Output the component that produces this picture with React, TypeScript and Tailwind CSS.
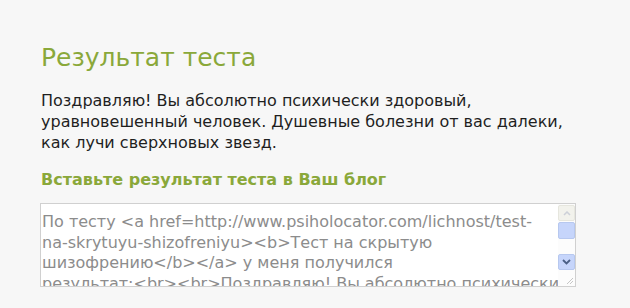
import React from "react";

function ScrollBar() {
  return (
    <div className="flex w-[17px] flex-col bg-[#fcfcfc] pt-[1px]">
      <div className="flex h-[16px] items-center justify-center rounded-[2px] border border-[#e6e6de] bg-[#f2f2ec]">
        <svg width="8" height="5" viewBox="0 0 8 5">
          <path d="M1 4 L4 1 L7 4" fill="none" stroke="#cdd0d8" strokeWidth="1.5" />
        </svg>
      </div>
      <div className="mt-[1px] h-[17px] rounded-[2px] border border-[#b7c8ef] bg-[#c6d5fb]" />
      <div className="h-[15px]" />
      <div className="flex h-[16px] items-center justify-center rounded-[2px] border border-[#b7c8ef] bg-[#c6d5fb]">
        <svg width="9" height="6" viewBox="0 0 9 6">
          <path d="M1 1 L4.5 4.5 L8 1" fill="none" stroke="#4a5f86" strokeWidth="1.8" />
        </svg>
      </div>
      <div className="relative flex-1">
        <svg className="absolute bottom-[1px] right-[1px]" width="10" height="10" viewBox="0 0 10 10">
          <path d="M9 3 L3 9 M9 6 L6 9" stroke="#c6c6c6" strokeWidth="1" />
        </svg>
      </div>
    </div>
  );
}

export default function App() {
  return (
    <div className="h-[308px] w-[630px] overflow-hidden bg-[#f7f7f7] font-['DejaVu_Sans',Verdana,sans-serif]">
      <div className="pl-[41px] pt-[43px]">
        <h1 className="text-[25px] leading-[30px] text-[#8aa83a]">Результат теста</h1>
        <p className="mt-[17px] text-[16px] leading-[21px] text-[#1f1f1f]">
          Поздравляю! Вы абсолютно психически здоровый,
          <br />
          уравновешенный человек. Душевные болезни от вас далеки,
          <br />
          как лучи сверхновых звезд.
        </p>
        <h2 className="mt-[16px] text-[16px] font-bold leading-[22px] text-[#8aa83a]">
          Вставьте результат теста в Ваш блог
        </h2>
        <div className="ml-[-1px] mt-[12px] flex h-[84px] w-[536px] border border-[#d0d0d0] bg-white">
          <div className="flex-1 overflow-hidden whitespace-nowrap pl-[1px] pt-[8px] text-[16px] leading-[20.5px] text-[#8c8c8c]">
            По тесту &lt;a href=http://www.psiholocator.com/lichnost/test-
            <br />
            na-skrytuyu-shizofreniyu&gt;&lt;b&gt;Тест на скрытую
            <br />
            шизофрению&lt;/b&gt;&lt;/a&gt; у меня получился
            <br />
            результат:&lt;br&gt;&lt;br&gt;Поздравляю! Вы абсолютно психически
          </div>
          <ScrollBar />
        </div>
      </div>
    </div>
  );
}
